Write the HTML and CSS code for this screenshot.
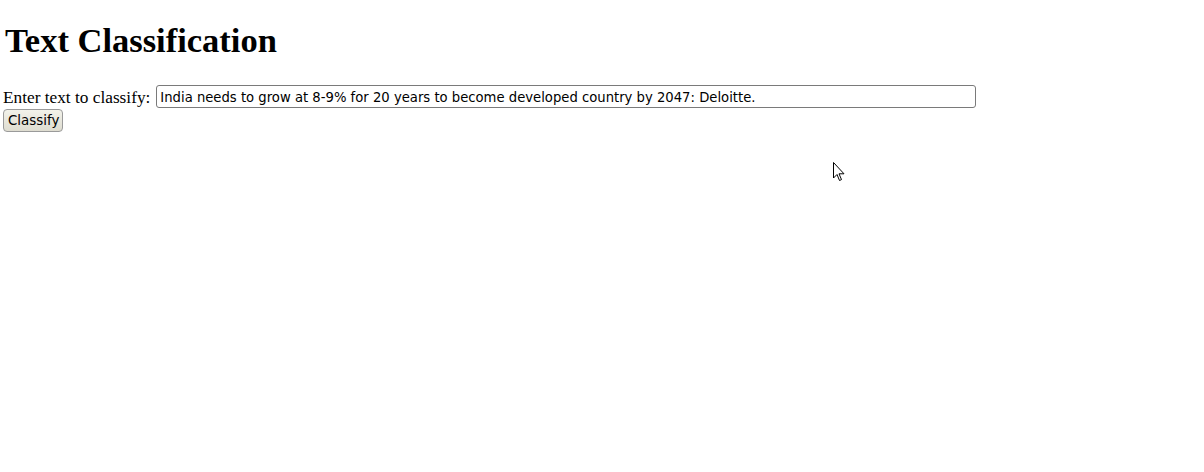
FILE: index.html
```html
<!DOCTYPE html>
<html>
<head>
<meta charset="utf-8">
<link rel="stylesheet" href="styles.css">
</head>
<body>
<h1 class="title">Text Classification</h1>
<form class="form">
  <div class="row">
    <label class="label" for="txt">Enter text to classify:</label>
    <input class="field" id="txt" type="text" value="India needs to grow at 8-9% for 20 years to become developed country by 2047: Deloitte.">
  </div>
  <button class="btn" type="button">Classify</button>
</form>
<svg class="cursor" width="14" height="22" viewBox="0 0 14 22"><path d="M0.5 0.5 L0.5 16 L4 12.5 L6.5 18.5 L8.5 17.6 L6 11.8 L11 11.8 Z" fill="#fff" stroke="#000" stroke-width="1"/></svg>
</body>
</html>
```
FILE: styles.css
```css
html, body { background: #fff; }
body {
  margin: 3px;
  font-family: "Liberation Serif", "Times New Roman", serif;
  font-size: 17px;
  color: #000;
  position: relative;
  min-height: 460px;
}
.title {
  font-size: 34.5px;
  font-weight: bold;
  margin: 17px 0 0 2px;
  line-height: 40px;
}
.form { margin: 25px 0 0 0; }
.row {
  display: flex;
  align-items: center;
  gap: 6px;
  height: 23px;
}
.label { font-size: 17.3px; line-height: 20px; padding-top: 3px; }
.field {
  width: 820px;
  height: 23px;
  box-sizing: border-box;
  border: 1px solid #7a7a7a;
  border-radius: 3px;
  padding: 1px 3px 0 3px;
  font-family: "DejaVu Sans", Tahoma, sans-serif;
  font-size: 13.2px;
  color: #000;
  margin: 0;
}
.btn {
  display: block;
  box-sizing: border-box;
  font-family: "DejaVu Sans", Tahoma, sans-serif;
  font-size: 13.4px;
  height: 23px;
  width: 60px;
  padding: 0 4px;
  border: 1px solid #9a9a9a;
  border-radius: 4px;
  background: linear-gradient(#f2f2ea, #dedcd0);
  color: #000;
  margin: 1px 0 0 0;
}
.cursor {
  position: absolute;
  left: 830px;
  top: 159px;
}
```
